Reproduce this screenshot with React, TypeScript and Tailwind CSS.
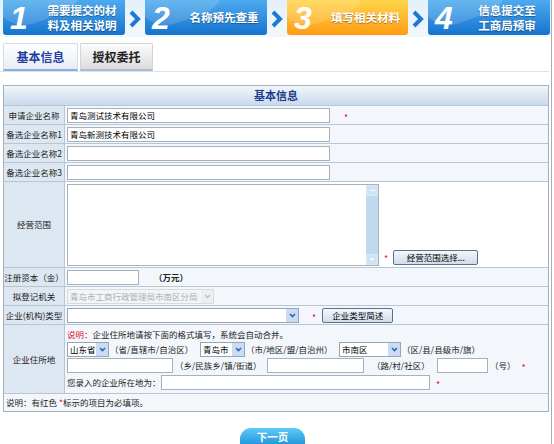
import React from 'react'

const FONT = "font-['Noto_Sans_CJK_SC','Noto_Sans',sans-serif]"

const Arrow = () => (
  <div className="flex w-[20px] items-center justify-center">
    <svg width="14" height="20" viewBox="0 0 14 20">
      <polyline points="3,3 10,10 3,17" fill="none" stroke="#1d7ad2" strokeWidth="4" strokeLinejoin="miter" />
    </svg>
  </div>
)

const Step = ({ num, lines, orange, w }: { num: string; lines: string[]; orange?: boolean; w: string }) => (
  <div
    className={`relative flex h-[35px] ${w} items-center overflow-hidden rounded-b-[3px] ${
      orange ? 'bg-gradient-to-b from-[#ffd54a] to-[#ff9c0c]' : 'bg-gradient-to-b from-[#4caaee] to-[#1473cf]'
    }`}
  >
    <div className="absolute -left-[10px] -top-[40px] h-[60px] w-[90px] rotate-[-20deg] rounded-full bg-white/15" />
    <span className="relative w-[36px] pl-[7px] text-[32px] leading-[32px] font-bold italic text-white font-['Liberation_Sans',sans-serif]">
      {num}
    </span>
    <div className="relative flex flex-1 flex-col items-center text-[11.5px] leading-[15px] font-bold whitespace-nowrap text-white [text-shadow:0_1px_1px_rgba(0,0,0,0.35)]">
      {lines.map((l) => (
        <span key={l}>{l}</span>
      ))}
    </div>
  </div>
)

const Star = ({ className = '' }: { className?: string }) => (
  <span className={`text-[9px] leading-none text-[#e8102a] ${className}`}>*</span>
)

const Input = ({ w, value = '' }: { w: string; value?: string }) => (
  <div className={`flex h-[15px] ${w} shrink-0 items-center border border-[#a4b1c0] bg-white pl-[2px] text-[8.5px] whitespace-nowrap text-black`}>
    {value}
  </div>
)

const Select = ({ w, value, disabled }: { w: string; value: string; disabled?: boolean }) => (
  <div
    className={`flex h-[15px] ${w} shrink-0 items-center border ${
      disabled ? 'border-[#d6dbe1] bg-[#f4f4f4] text-[#a9b0b8]' : 'border-[#97a6b7] bg-white text-black'
    }`}
  >
    <span className="flex-1 overflow-hidden whitespace-nowrap pl-[2px] text-[8.5px]">{value}</span>
    <div className={`flex h-full w-[12px] shrink-0 items-center justify-center ${disabled ? 'bg-[#eeeeee]' : 'bg-[#c9dcf3]'}`}>
      <svg width="7" height="5" viewBox="0 0 7 5">
        <polyline points="1,1 3.5,3.5 6,1" fill="none" stroke={disabled ? '#c4c4c4' : '#2f63b3'} strokeWidth="1.6" />
      </svg>
    </div>
  </div>
)

const Btn = ({ w, children }: { w: string; children: React.ReactNode }) => (
  <div
    className={`flex h-[15px] ${w} shrink-0 items-center justify-center rounded-[2px] border border-[#5f6f86] bg-gradient-to-b from-[#f4f7fb] to-[#d3dcea] text-[8.5px] whitespace-nowrap text-black`}
  >
    {children}
  </div>
)

const Row = ({ label, h, white, children }: { label: string; h: string; white?: boolean; children: React.ReactNode }) => (
  <div className={`flex ${h} border-b border-[#b8c5d3]`}>
    <div className="flex w-[61px] shrink-0 items-center justify-center border-r border-[#b8c5d3] bg-[#dde7f2] text-[8.5px] whitespace-nowrap text-[#222]">
      {label}
    </div>
    <div className={`flex flex-1 items-center pl-[2px] text-[8.5px] whitespace-nowrap text-[#222] ${white ? 'bg-white' : 'bg-[#f3f7fc]'}`}>
      {children}
    </div>
  </div>
)

export default function App() {
  return (
    <div className={`relative h-[444px] w-[554px] overflow-hidden bg-white ${FONT}`}>
      <div className="h-[444px] w-[552px] border-r border-[#a7adb5]">
        {/* progress steps */}
        <div className="flex h-[37px] bg-gradient-to-b from-[#e3f0fa] to-[#f2f8fd] pl-[3px]">
          <Step w="w-[122px]" num="1" lines={['需要提交的材', '料及相关说明']} />
          <Arrow />
          <Step w="w-[122px]" num="2" lines={['名称预先查重']} />
          <Arrow />
          <Step w="w-[121px]" num="3" lines={['填写相关材料']} orange />
          <Arrow />
          <Step w="w-[122px]" num="4" lines={['信息提交至', '工商局预审']} />
        </div>

        {/* tabs */}
        <div className="mt-[6px] flex h-[29px] w-[549px] items-end gap-[2px] border-b border-[#dbe2ec] pl-[3px]">
          <div className="flex h-[28px] w-[75px] items-center justify-center rounded-t-[2px] border-x border-t border-[#d3dbe6] border-b-2 border-b-[#86aee0] bg-gradient-to-b from-white to-[#e8edf4] text-[12px] font-bold text-[#233fa6]">
            基本信息
          </div>
          <div className="flex h-[28px] w-[73px] items-center justify-center rounded-t-[2px] border-x border-t border-[#d3d3d3] border-b-2 border-b-[#a9bcd3] bg-gradient-to-b from-[#fbfbfb] to-[#dcdcdc] text-[12px] font-bold text-[#222]">
            授权委托
          </div>
        </div>

        {/* form */}
        <div className="ml-[3px] mt-[13px] w-[546px] border border-[#a3b1c1]">
          <div className="flex h-[20px] items-center justify-center border-b border-[#b8c5d3] bg-gradient-to-b from-[#f1f6fb] to-[#c9d9ec] text-[11px] font-bold text-[#1d3b8c]">
            基本信息
          </div>
          <Row label="申请企业名称" h="h-[19px]">
            <Input w="w-[263px]" value="青岛测试技术有限公司" />
            <Star className="ml-[14px] mt-[4px]" />
          </Row>
          <Row label="备选企业名称1" h="h-[19px]">
            <Input w="w-[263px]" value="青岛新测技术有限公司" />
          </Row>
          <Row label="备选企业名称2" h="h-[19px]">
            <Input w="w-[263px]" />
          </Row>
          <Row label="备选企业名称3" h="h-[19px]">
            <Input w="w-[263px]" />
          </Row>
          <Row label="经营范围" h="h-[86px]" white>
            <div className="flex h-[82px] w-[312px] border border-[#a4b1c0] bg-white">
              <div className="flex-1" />
              <div className="flex w-[12px] flex-col justify-between bg-[#bfd9ee]">
                <div className="flex h-[11px] items-center justify-center border border-[#d9e8f5] bg-[#cfe3f3]">
                  <div className="h-[1px] w-[5px] bg-white" />
                </div>
                <div className="flex h-[11px] items-center justify-center border border-[#d9e8f5] bg-[#cfe3f3]">
                  <svg width="6" height="4" viewBox="0 0 6 4">
                    <polyline points="1,1 3,3 5,1" fill="none" stroke="#fff" strokeWidth="1.2" />
                  </svg>
                </div>
              </div>
            </div>
            <div className="flex h-full items-end pb-[2px]">
              <Star className="mb-[2px] ml-[5px] mr-[5px]" />
              <Btn w="w-[85px]">经营范围选择...</Btn>
            </div>
          </Row>
          <Row label="注册资本（金）" h="h-[19px]">
            <Input w="w-[72px]" />
            <span className="ml-[15px] font-bold">（万元）</span>
          </Row>
          <Row label="拟登记机关" h="h-[19px]">
            <Select w="w-[147px]" value="青岛市工商行政管理局市南区分局" disabled />
          </Row>
          <Row label="企业(机构)类型" h="h-[19px]">
            <Select w="w-[232px]" value="" />
            <Star className="ml-[13px] mr-[6px] mt-[4px]" />
            <Btn w="w-[71px]">企业类型简述</Btn>
          </Row>
          <Row label="企业住所地" h="h-[69px]">
            <div className="flex h-full flex-col justify-center gap-[1px]">
              <div className="flex h-[14px] items-center">
                <span className="text-[#e0102a]">说明：</span>
                <span>企业住所地请按下面的格式填写，系统会自动合并。</span>
              </div>
              <div className="flex h-[15px] items-center">
                <Select w="w-[42px]" value="山东省" />
                <span className="ml-[1px] w-[90px]">（省/直辖市/自治区）</span>
                <Select w="w-[45px]" value="青岛市" />
                <span className="ml-[1px] w-[93px]">（市/地区/盟/自治州）</span>
                <Select w="w-[62px]" value="市南区" />
                <span className="ml-[1px]">（区/县/县级市/旗）</span>
              </div>
              <div className="flex h-[15px] items-center">
                <Input w="w-[106px]" />
                <span className="ml-[2px] w-[92px]">（乡/民族乡/镇/街道）</span>
                <Input w="w-[97px]" />
                <span className="ml-[8px] w-[65px]">（路/村/社区）</span>
                <Input w="w-[51px]" />
                <span className="ml-[2px]">（号）</span>
                <Star className="ml-[6px] mt-[4px]" />
              </div>
              <div className="flex h-[17px] items-center">
                <span className="w-[94px]">您录入的企业所在地为：</span>
                <Input w="w-[269px]" />
                <Star className="ml-[6px] mt-[4px]" />
              </div>
            </div>
          </Row>
          <div className="flex h-[17px] items-center bg-[#f3f7fc] pl-[2px] text-[8.5px] whitespace-nowrap text-[#222]">
            说明：有红色&nbsp;
            <span className="text-[#e8102a]">*</span>
            标示的项目为必填项。
          </div>
        </div>

        {/* next */}
        <div className="mt-[16px] flex justify-center pr-[6px]">
          <div className="flex h-[20px] w-[65px] items-start justify-center rounded-t-[11px] bg-gradient-to-b from-[#5ccbf6] to-[#0f8cd6] pt-[2px] text-[10.5px] leading-[13px] font-bold text-white">
            下一页
          </div>
        </div>
      </div>
    </div>
  )
}
